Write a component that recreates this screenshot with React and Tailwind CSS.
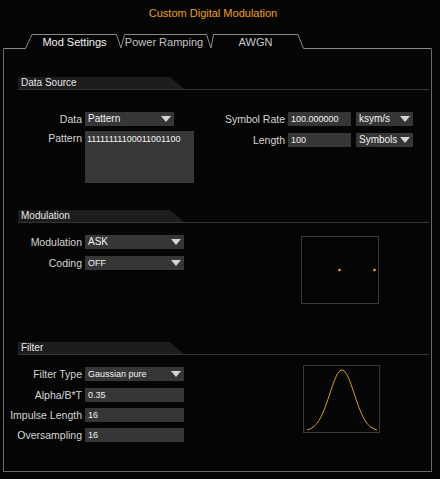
import React from 'react';

const Arrow = () => (
  <svg width="10" height="6" viewBox="0 0 10 6" className="shrink-0">
    <polygon points="0,0 10,0 5,6" fill="#d4d4d4" />
  </svg>
);

const Label = ({ children, className = 'w-[78px]' }) => (
  <div className={`${className} shrink-0 text-right text-[10.5px] leading-[14px] text-[#d6d6d6] whitespace-nowrap`}>
    {children}
  </div>
);

const Select = ({ value, className, text = 'text-[10px]' }) => (
  <div className={`${className} ${text} h-[14px] bg-[#363636] flex items-center justify-between pl-[3px] pr-[3px] leading-[14px] text-[#f2f2f2]`}>
    <span>{value}</span>
    <Arrow />
  </div>
);

const Input = ({ value, className }) => (
  <div className={`${className} h-[14px] bg-[#363636] pl-[3px] text-[9px] leading-[14px] text-[#f2f2f2]`}>
    {value}
  </div>
);

const SectionHeader = ({ title, className }) => (
  <div className={`flex h-[13px] border-b border-[#343434] ml-[14px] mr-[2px] ${className}`}>
    <div className="w-[166px] h-[12px] bg-[#1d1d1d] [clip-path:polygon(0_0,152px_0,100%_100%,0_100%)] text-[10px] leading-[12px] text-[#e6e6e6] pl-[3px]">
      {title}
    </div>
  </div>
);

// gaussian impulse response preview
const gaussPath = () => {
  const pts = [];
  for (let x = 3; x <= 73; x += 1) {
    const y = 65 - 61 * Math.exp(-((x - 38) ** 2) / (2 * 12.3 * 12.3));
    pts.push(`${x},${y.toFixed(2)}`);
  }
  return 'M' + pts.join(' L');
};

export default function App() {
  return (
    <div className="w-[440px] h-[479px] bg-[#050505] overflow-hidden font-['Liberation_Sans',Arial,sans-serif]">
      {/* Title */}
      <div className="h-[34px] w-[426px] pt-[6px] text-center text-[11px] leading-[14px] text-[#eea20c]">
        Custom Digital Modulation
      </div>

      {/* Tabs */}
      <div className="relative h-[15px]">
        <svg className="absolute inset-0" width="440" height="15" viewBox="0 0 440 15">
          <path
            d="M3.5 14.5 H25.5 L32 0.5 H116.5 L121 14 L124.5 0.5 H206.5 L211 14 L213.5 0.5 H298 L303.5 14.5 H431.5"
            fill="none"
            stroke="#8a8a8a"
            strokeWidth="1"
          />
        </svg>
        <div className="relative flex h-full items-center text-[11px] leading-[14px]">
          <div className="w-[27px]" />
          <div className="w-[95px] text-center text-[#f2f2f2]">Mod Settings</div>
          <div className="w-[84px] text-center text-[#c2c2c2]">Power Ramping</div>
          <div className="w-[99px] text-center text-[#c8c8c8]">AWGN</div>
        </div>
      </div>

      {/* Panel */}
      <div className="ml-[3px] w-[429px] h-[423px] border-l border-r border-b border-[#6a6a6a] flex flex-col">
        {/* Data Source */}
        <SectionHeader title="Data Source" className="mt-[28px]" />
        <div className="flex mt-[22px]">
          <div className="w-[190px] flex flex-col gap-[5px]">
            <div className="flex gap-[3px]">
              <Label>Data</Label>
              <Select value="Pattern" className="w-[89px]" />
            </div>
            <div className="flex gap-[3px] items-start">
              <Label>Pattern</Label>
              <div className="w-[109px] h-[52px] bg-[#383838] pl-[2px] pt-[2px] text-[9px] leading-[12px] text-[#f2f2f2]">
                11111111100011001100
              </div>
            </div>
          </div>
          <div className="flex flex-col gap-[7px]">
            <div className="flex">
              <Label className="w-[91px]">Symbol Rate</Label>
              <Input value="100.000000" className="w-[63px] ml-[3px]" />
              <Select value="ksym/s" className="w-[57px] ml-[5px]" />
            </div>
            <div className="flex">
              <Label className="w-[91px]">Length</Label>
              <Input value="100" className="w-[63px] ml-[3px]" />
              <Select value="Symbols" className="w-[57px] ml-[5px]" />
            </div>
          </div>
        </div>

        {/* Modulation */}
        <SectionHeader title="Modulation" className="mt-[27px]" />
        <div className="flex mt-[12px] items-start">
          <div className="w-[180px] flex flex-col gap-[7px]">
            <div className="flex gap-[3px]">
              <Label>Modulation</Label>
              <Select value="ASK" className="w-[99px]" />
            </div>
            <div className="flex gap-[3px]">
              <Label>Coding</Label>
              <Select value="OFF" className="w-[99px]" text="text-[9px]" />
            </div>
          </div>
          <div className="ml-[117px] mt-[1px] w-[78px] h-[68px] border border-[#3a3a3a]">
            <svg width="76" height="66" viewBox="0 0 76 66">
              <circle cx="37.5" cy="33" r="1.3" fill="#ffad00" />
              <circle cx="72.5" cy="33" r="1.3" fill="#ffad00" />
            </svg>
          </div>
        </div>

        {/* Filter */}
        <SectionHeader title="Filter" className="mt-[38px]" />
        <div className="flex mt-[10px] items-start">
          <div className="w-[180px] pt-[2px] flex flex-col gap-[6px]">
            <div className="flex gap-[3px] mb-[1px]">
              <Label>Filter Type</Label>
              <Select value="Gaussian pure" className="w-[99px]" text="text-[9px]" />
            </div>
            <div className="flex gap-[3px]">
              <Label>Alpha/B*T</Label>
              <Input value="0.35" className="w-[99px]" />
            </div>
            <div className="flex gap-[3px]">
              <Label>Impulse Length</Label>
              <Input value="16" className="w-[99px]" />
            </div>
            <div className="flex gap-[3px]">
              <Label>Oversampling</Label>
              <Input value="16" className="w-[99px]" />
            </div>
          </div>
          <div className="ml-[119px] w-[77px] h-[68px] border border-[#3a3a3a]">
            <svg width="75" height="66" viewBox="0 0 75 66">
              <path d={gaussPath()} fill="none" stroke="#d8a200" strokeWidth="1" />
            </svg>
          </div>
        </div>
      </div>
    </div>
  );
}
